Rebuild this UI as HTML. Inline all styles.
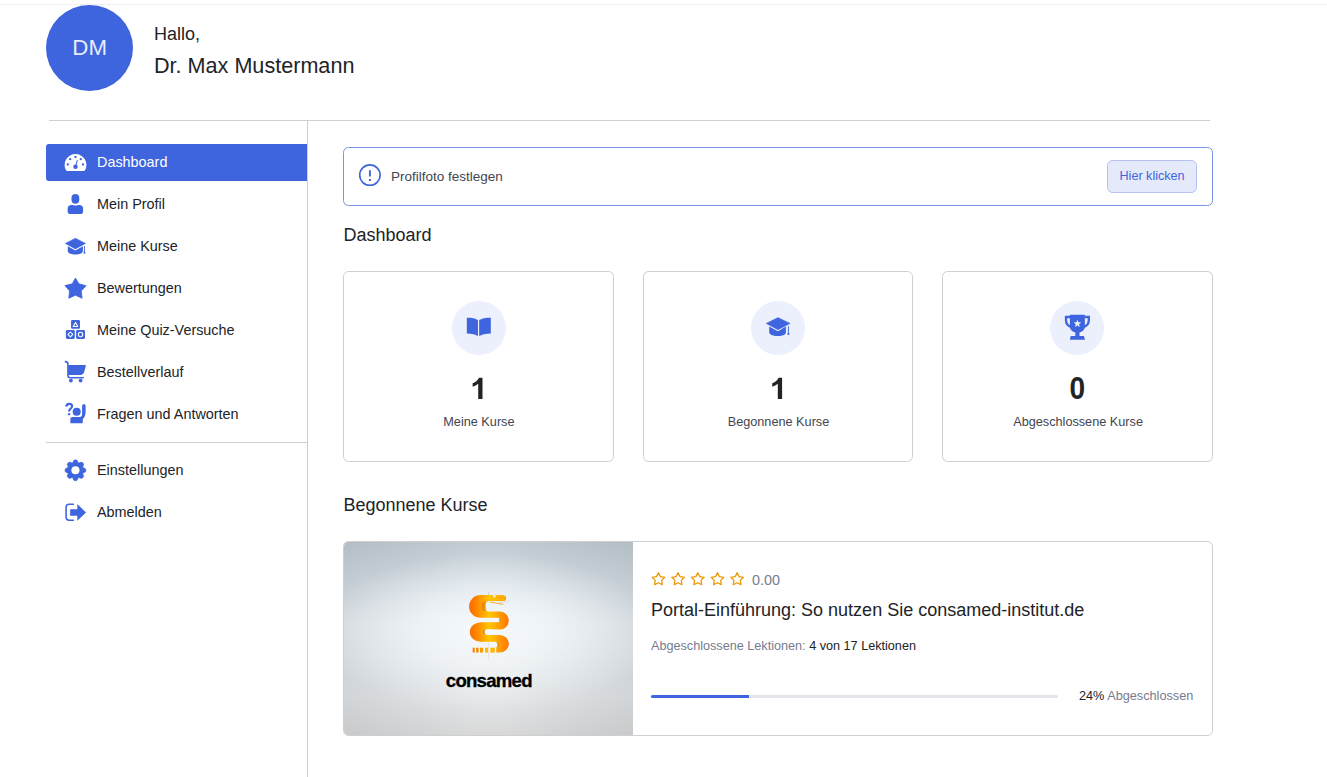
<!DOCTYPE html>
<html lang="de">
<head>
<meta charset="utf-8">
<title>Dashboard</title>
<style>
*{box-sizing:border-box;margin:0;padding:0}
html,body{width:1327px;height:777px;overflow:hidden;background:#fff}
body{font-family:"Liberation Sans",sans-serif;color:#212327;position:relative}
.abs{position:absolute}
.t{position:absolute;white-space:nowrap;line-height:1}
svg{position:absolute;overflow:visible}
.topline{left:0;top:4px;width:1327px;height:1px;background:#eff0f2}
.avatar{left:46px;top:5px;width:87px;height:85.9px;border-radius:50%;background:#3e64de}
.hr{left:49px;top:120px;width:1161px;height:1px;background:#cdcfd5}
.vr{left:307px;top:120px;width:1px;height:657px;background:#cdcfd5}
.hr2{left:46px;top:442px;width:261px;height:1px;background:#cdcfd5}
.active{left:46px;top:144px;width:261px;height:37px;background:#3e64de;border-radius:3px 0 0 3px}
.mi{font-size:14.4px;color:#212327;left:97px}
.alert{left:343px;top:147px;width:870px;height:59px;border:1px solid #7b93e8;border-radius:5.5px;background:#fff}
.btn{left:1107px;top:160px;width:90px;height:33px;border:1px solid #b5c1f1;border-radius:5.5px;background:#e5eafa}
.card{top:271px;width:270.8px;height:191px;border:1px solid #cdcfd5;border-radius:5.5px;background:#fff}
.circ{top:301px;width:54px;height:54px;border-radius:50%;background:#ecf0fc}
.num{font-weight:bold;font-size:31.2px;color:#212327;text-align:center;width:270.8px;top:373px;transform:scaleX(.9);transform-origin:50% 50%}
.lbl{font-size:12.7px;color:#41454f;text-align:center;width:270.8px;top:415.5px}
.h{font-size:18px;color:#212327;left:343.4px}
.course{left:343px;top:541px;width:870px;height:195px;border:1px solid #cdcfd5;border-radius:5.5px;background:#fff;overflow:hidden}
.thumb{left:0;top:0;width:289px;height:195px;
 background:
  radial-gradient(ellipse 60% 40% at 50% 46%, rgba(245,249,252,1) 0%, rgba(245,249,252,.7) 40%, rgba(245,249,252,0) 100%),
  linear-gradient(90deg, rgba(80,90,100,.12), rgba(80,90,100,0) 45%, rgba(80,90,100,0) 55%, rgba(80,90,100,.12)),
  linear-gradient(180deg,#c1cbd2 0%,#d3dce2 21%,#e3e8ec 43%,#e3e6e8 80%,#d8d8d8 100%);}
</style>
</head>
<body>
<div class="abs topline"></div>
<div class="abs avatar"></div>
<div class="t" style="left:72.3px;top:36.8px;font-size:22.3px;color:#e7ecfb">DM</div>
<div class="t" style="left:154px;top:24.5px;font-size:18px;color:#212327">Hallo,</div>
<div class="t" style="left:154px;top:54.5px;font-size:21.6px;color:#212327">Dr. Max Mustermann</div>
<div class="abs hr"></div>
<div class="abs vr"></div>
<div class="abs active"></div>
<div class="abs hr2"></div>

<div class="t mi" style="top:155px;color:#fff">Dashboard</div>
<div class="t mi" style="top:197px">Mein Profil</div>
<div class="t mi" style="top:239px">Meine Kurse</div>
<div class="t mi" style="top:281px">Bewertungen</div>
<div class="t mi" style="top:323px">Meine Quiz-Versuche</div>
<div class="t mi" style="top:365px">Bestellverlauf</div>
<div class="t mi" style="top:407px">Fragen und Antworten</div>
<div class="t mi" style="top:463px">Einstellungen</div>
<div class="t mi" style="top:505px">Abmelden</div>

<div class="abs alert"></div>
<div class="t" style="left:391px;top:169.7px;font-size:13.5px;color:#41454f">Profilfoto festlegen</div>
<div class="abs btn"></div>
<div class="t" style="left:1119.5px;top:169.5px;font-size:12.6px;color:#3e64de">Hier klicken</div>

<div class="t h" style="top:225.5px">Dashboard</div>

<div class="abs card" style="left:343px"></div>
<div class="abs card" style="left:642.6px"></div>
<div class="abs card" style="left:942.2px"></div>
<div class="abs circ" style="left:452px"></div>
<div class="abs circ" style="left:751px"></div>
<div class="abs circ" style="left:1050px"></div>
<div class="t num" style="left:942.2px">0</div>
<div class="t lbl" style="left:343.5px">Meine Kurse</div>
<div class="t lbl" style="left:643.1px">Begonnene Kurse</div>
<div class="t lbl" style="left:942.7px">Abgeschlossene Kurse</div>

<div class="t h" style="top:495.5px">Begonnene Kurse</div>

<div class="abs course">
  <div class="abs thumb"></div>
</div>
<div class="t" style="left:445.8px;top:672px;font-size:18.6px;font-weight:bold;color:#000;letter-spacing:-0.75px;-webkit-text-stroke:0.3px #000">consamed</div>
<div class="t" style="left:752px;top:572.7px;font-size:14.4px;color:#757c8e">0.00</div>
<div class="t" style="left:651px;top:601px;font-size:18px;color:#212327">Portal-Einführung: So nutzen Sie consamed-institut.de</div>
<div class="t" style="left:651px;top:639.8px;font-size:12.65px;color:#757c8e">Abgeschlossene Lektionen: <span style="color:#212327">4 von 17 Lektionen</span></div>
<div class="abs" style="left:651px;top:694.7px;width:406.5px;height:3.5px;border-radius:2px;background:#e3e5eb"></div>
<div class="abs" style="left:651px;top:694.7px;width:98px;height:3.5px;border-radius:2px 0 0 2px;background:#3e64de"></div>
<div class="t" style="left:1079px;top:689.8px;font-size:12.7px;color:#212327">24% <span style="color:#757c8e">Abgeschlossen</span></div>
<svg width="1327" height="777" viewBox="0 0 1327 777" style="left:0;top:0">
<g><path d="M67.1 171 C66.5 171 66.2 170.7 65.9 170.1 A10.9 10.9 0 1 1 85.1 170.1 C84.8 170.7 84.5 171 83.9 171 Z" fill="#fff"/>
<circle cx="67.8" cy="164.4" r="1.15" fill="#3e64de"/>
<circle cx="70.2" cy="159.2" r="1.15" fill="#3e64de"/>
<circle cx="75.5" cy="157" r="1.15" fill="#3e64de"/>
<circle cx="80.8" cy="159.2" r="1.15" fill="#3e64de"/>
<circle cx="83" cy="164.4" r="1.15" fill="#3e64de"/>
<circle cx="75.5" cy="166.7" r="2.2" fill="#3e64de"/><path d="M75.5 166.7 L77.3 160.4" stroke="#3e64de" stroke-width="1.05" stroke-linecap="round"/></g>
<g fill="#3e64de"><rect x="71.5" y="194.1" width="7.8" height="9.6" rx="3.9" ry="4.2"/><path d="M67.65 208.6 C67.65 206 69.2 204.9 71.5 204.9 L73 204.9 C74.4 205.8 76.4 205.8 77.8 204.9 L79.3 204.9 C81.6 204.9 83.1 206 83.1 208.6 L83.1 211.7 C83.1 213.4 81.8 214.1 80.1 214.1 L70.7 214.1 C69 214.1 67.65 213.4 67.65 211.7 Z"/></g>
<g fill="#3e64de"><path d="M75.4 238.2 L85.6 243.4 L75.4 249 L65.3 243.4 Z" stroke="#3e64de" stroke-width="0.5" stroke-linejoin="round"/><path d="M67.8 246.2 L75.4 250.4 L82.9 246.2 L82.9 251.00 C82.9 253.40 78.9 254.6 75.4 254.6 C71.9 254.6 67.8 253.40 67.8 251.00 Z"/><path d="M84.45 246.0 L84.45 252.2" stroke="#3e64de" stroke-width="0.9"/><circle cx="84.45" cy="252.79999999999998" r="1.0"/></g>
<polygon points="75.45,278.05 78.85,283.85 86,285.7 81.2,291 82.1,298.3 75.45,295.2 68.8,298.3 69.6,291 64.95,285.6 72.3,283.85" fill="#3e64de" stroke="#3e64de" stroke-width="0.8" stroke-linejoin="round"/>
<g><rect x="71.05" y="319.9" width="8.9" height="8.9" rx="1.3" fill="#3e64de"/><rect x="65.9" y="330" width="8.9" height="8.9" rx="1.3" fill="#3e64de"/><rect x="76.1" y="330" width="8.9" height="8.9" rx="1.3" fill="#3e64de"/>
<path d="M75.5 322.4 L77.8 326.4 L73.2 326.4 Z" fill="none" stroke="#fff" stroke-width="1.05" stroke-linejoin="round"/>
<path d="M70.35 332 L72.8 334.45 L70.35 336.9 L67.9 334.45 Z" fill="none" stroke="#fff" stroke-width="1.05" stroke-linejoin="round"/>
<circle cx="80.55" cy="334.45" r="2.2" fill="none" stroke="#fff" stroke-width="1.05"/></g>
<g><path d="M65.4 361.6 C67.2 361.6 67.95 362.6 67.95 364.5 L67.95 375.3 C67.95 377 68.8 377.7 70.2 377.7 L83.2 377.7" fill="none" stroke="#3e64de" stroke-width="1.6" stroke-linecap="round"/>
<path d="M68.2 364.9 L85 364.9 C85.7 364.9 86 365.4 85.8 366.1 L84.3 371.6 C83.7 373.8 82.6 374.9 80.8 374.9 L68.2 374.9 Z" fill="#3e64de"/>
<circle cx="70.9" cy="380.6" r="1.9" fill="#3e64de"/><circle cx="80.6" cy="380.6" r="1.9" fill="#3e64de"/></g>
<g><path d="M66.2 406.6 C66.4 404.6 67.6 403.9 69.2 403.9 C71 403.9 72.1 404.9 72.1 406.3 C72.1 408.6 69 408.6 69 411.6" fill="none" stroke="#3e64de" stroke-width="2.1"/><rect x="67.85" y="413.2" width="2.4" height="2" fill="#3e64de"/>
<circle cx="76.7" cy="411.8" r="4.05" fill="#3e64de"/>
<path d="M70.35 423.2 L70.35 419 C70.35 417.8 71.2 417 72.5 417 L79.8 417 C81.3 417 82.1 415.8 82.1 414 L82.1 405.8 C82.1 404.7 82.9 404.15 83.85 404.15 C84.8 404.15 85.6 404.7 85.6 405.8 L85.6 412.3 C85.6 415.3 84.4 417.3 82.8 419.3 L82.7 423.2 Z" fill="#3e64de"/></g>
<g><polygon points="72.62,462.92 74.10,460.04 76.80,460.04 78.28,462.92 78.66,463.08 81.75,462.09 83.66,464.00 82.67,467.09 82.83,467.47 85.71,468.95 85.71,471.65 82.83,473.13 82.67,473.51 83.66,476.60 81.75,478.51 78.66,477.52 78.28,477.68 76.80,480.56 74.10,480.56 72.62,477.68 72.24,477.52 69.15,478.51 67.24,476.60 68.23,473.51 68.07,473.13 65.19,471.65 65.19,468.95 68.07,467.47 68.23,467.09 67.24,464.00 69.15,462.09 72.24,463.08" fill="#3e64de" stroke="#3e64de" stroke-width="0.7" stroke-linejoin="round"/><circle cx="75.45" cy="470.3" r="4.05" fill="#fff"/></g>
<g><path d="M73.4 504.3 L69 504.3 Q66.1 504.3 66.1 507.2 L66.1 517.3 Q66.1 520.2 69 520.2 L73.4 520.2" fill="none" stroke="#3e64de" stroke-width="1.55" stroke-linecap="round"/><polygon points="70.15,509.15 77.3,509.15 77.3,504.1 86,512.4 77.3,520.75 77.3,515.7 70.15,515.7" fill="#3e64de"/></g>
<g><circle cx="369.9" cy="175.1" r="10.2" fill="none" stroke="#3e64de" stroke-width="1.6"/><rect x="368.95" y="170.2" width="1.9" height="6.3" fill="#3e64de"/><rect x="368.9" y="179" width="2" height="2" fill="#3e64de"/></g>
<g fill="#3e64de"><path d="M466.8 317.7 L470.5 317.7 Q474.8 318 477.95 320.1 L477.95 336 Q474.8 334 470.5 333.7 L466.8 333.6 Z"/><path d="M490.8 317.7 L487.1 317.7 Q482.8 318 479.15 320.1 L479.15 336 Q482.8 334 487.1 333.7 L490.8 333.6Z"/></g>
<g fill="#3e64de"><path d="M777.95 317.6 L790.1 323.4 L777.95 329.7 L766.25 323.4 Z" stroke="#3e64de" stroke-width="0.5" stroke-linejoin="round"/><path d="M769.2 326.4 L777.95 331.3 L785.9 326.4 L785.9 332.40 C785.9 334.80 781.45 336 777.95 336 C774.45 336 769.2 334.80 769.2 332.40 Z"/><path d="M788.4 326.2 L788.4 333.4" stroke="#3e64de" stroke-width="0.9"/><circle cx="788.4" cy="334.0" r="1.1"/></g>
<g><path d="M1069.85 314.65 L1084.9 314.65 L1084.9 327 A7.525 5.8 0 0 1 1069.85 327 Z M1075.3 331 L1079.5 331 L1079.5 336 L1084 336 L1084.9 339.7 L1069.85 339.7 L1070.7 336 L1075.3 336 Z" fill="#3e64de"/>
<path d="M1070 317 L1066 317 L1066 320.3 Q1066 325.2 1071 326.9" fill="none" stroke="#3e64de" stroke-width="2.3"/><path d="M1084.8 317 L1088.8 317 L1088.8 320.3 Q1088.8 325.2 1083.8 326.9" fill="none" stroke="#3e64de" stroke-width="2.3"/>
<polygon points="1077.40,319.70 1078.43,322.28 1081.20,322.46 1079.06,324.24 1079.75,326.94 1077.40,325.45 1075.05,326.94 1075.74,324.24 1073.60,322.46 1076.37,322.28" fill="#ecf0fc"/></g>
<polygon points="658.45,572.75 660.42,576.64 664.73,577.31 661.64,580.39 662.33,584.69 658.45,582.70 654.57,584.69 655.26,580.39 652.17,577.31 656.48,576.64" fill="none" stroke="#ed9700" stroke-width="1.25" stroke-linejoin="round"/>
<polygon points="678.10,572.75 680.07,576.64 684.38,577.31 681.29,580.39 681.98,584.69 678.10,582.70 674.22,584.69 674.91,580.39 671.82,577.31 676.13,576.64" fill="none" stroke="#ed9700" stroke-width="1.25" stroke-linejoin="round"/>
<polygon points="697.80,572.75 699.77,576.64 704.08,577.31 700.99,580.39 701.68,584.69 697.80,582.70 693.92,584.69 694.61,580.39 691.52,577.31 695.83,576.64" fill="none" stroke="#ed9700" stroke-width="1.25" stroke-linejoin="round"/>
<polygon points="717.45,572.75 719.42,576.64 723.73,577.31 720.64,580.39 721.33,584.69 717.45,582.70 713.57,584.69 714.26,580.39 711.17,577.31 715.48,576.64" fill="none" stroke="#ed9700" stroke-width="1.25" stroke-linejoin="round"/>
<polygon points="737.10,572.75 739.07,576.64 743.38,577.31 740.29,580.39 740.98,584.69 737.10,582.70 733.22,584.69 733.91,580.39 730.82,577.31 735.13,576.64" fill="none" stroke="#ed9700" stroke-width="1.25" stroke-linejoin="round"/>
<path fill="#212327" d="M482.50 399.05 L478.20 399.05 L478.20 383.76 Q475.84 385.84 472.65 386.84 L472.65 383.16 Q474.33 382.64 476.30 381.19 Q478.28 379.73 479.01 377.80 L482.50 377.80 Z"/>
<path fill="#212327" d="M782.10 399.05 L777.80 399.05 L777.80 383.76 Q775.44 385.84 772.25 386.84 L772.25 383.16 Q773.93 382.64 775.90 381.19 Q777.88 379.73 778.61 377.80 L782.10 377.80 Z"/>
<defs><linearGradient id="sg" gradientUnits="userSpaceOnUse" x1="469" y1="0" x2="509" y2="0">
<stop offset="0" stop-color="#ff6600"/><stop offset="0.22" stop-color="#ff8b00"/><stop offset="0.5" stop-color="#ffc600"/><stop offset="0.78" stop-color="#ff9a00"/><stop offset="1" stop-color="#ff7400"/></linearGradient>
<linearGradient id="sh" x1="0" y1="0" x2="1" y2="0"><stop offset="0" stop-color="#c47600" stop-opacity=".6"/><stop offset="1" stop-color="#e89400" stop-opacity=".2"/></linearGradient>
<linearGradient id="sh2" x1="1" y1="0" x2="0" y2="0"><stop offset="0" stop-color="#c47600" stop-opacity=".6"/><stop offset="1" stop-color="#e89400" stop-opacity=".2"/></linearGradient></defs>
<rect x="488.1" y="591.6" width="1" height="4" fill="#cfcac6"/><rect x="488.1" y="641" width="1" height="18.4" fill="#e9e4e0"/>
<path d="M506.1 598.2 C506.1 596.4 505.2 595.6 503.2 595.5 L496 595.1 L480.4 595.1 A11.3 11.35 0 0 0 480.4 617.8 L499 617.8 A2.2 2.2 0 0 1 499 622.2 L480.9 622.2 A11.1 9.8 0 0 0 480.9 641.8 L496.5 641.8 A2.95 2.95 0 0 1 496.5 647.7 L496.2 647.7 L496.2 652.6 L499.5 652.6 A9.4 8.8 0 0 0 499.5 635 L485.45 635 A2.95 2.95 0 0 1 485.45 629.1 L500 629.6 A8.8 9 0 0 0 500 611.6 L489.3 611.6 Q485.6 611.6 485.6 607.9 L485.6 604.7 Q485.6 601 489.3 601 L503 600.8 C505 600.8 506.1 599.9 506.1 598.2 Z" fill="url(#sg)"/>
<path d="M485.5 601 Q481.8 601 481.8 604.7 L481.8 607.9 Q481.8 611.6 485.5 611.6 L489.3 611.6 Q485.6 611.6 485.6 607.9 L485.6 604.7 Q485.6 601 489.3 601 Z" fill="url(#sh)"/>
<path d="M485.45 629.1 A2.95 2.95 0 0 0 485.45 635 L487.6 635 A2.95 2.95 0 0 1 487.6 629.1 Z" fill="url(#sg)"/>
<path d="M485.45 629.1 A2.95 2.95 0 0 0 485.45 635 L487.6 635 A2.95 2.95 0 0 1 487.6 629.1 Z" fill="url(#sh)"/>
<path d="M499 617.8 A2.2 2.2 0 0 1 499 622.2 L497.4 622.2 A2.2 2.2 0 0 0 497.4 617.8 Z" fill="url(#sg)"/>
<path d="M499 617.8 A2.2 2.2 0 0 1 499 622.2 L497.4 622.2 A2.2 2.2 0 0 0 497.4 617.8 Z" fill="url(#sh2)"/>
<path d="M496.5 641.8 A2.95 2.95 0 0 1 496.5 647.7 L494.6 647.7 A2.95 2.95 0 0 0 494.6 641.8 Z" fill="url(#sg)"/>
<path d="M496.5 641.8 A2.95 2.95 0 0 1 496.5 647.7 L494.6 647.7 A2.95 2.95 0 0 0 494.6 641.8 Z" fill="url(#sh2)"/>
<rect x="490.3" y="647.7" width="4.40" height="4.9" fill="url(#sg)"/>
<rect x="485" y="647.7" width="3.20" height="4.9" fill="url(#sg)"/>
<rect x="480" y="647.7" width="3.00" height="4.9" fill="url(#sg)"/>
<rect x="476.1" y="647.7" width="2.50" height="4.9" fill="url(#sg)"/>
<rect x="472.7" y="647.7" width="2.00" height="4.9" fill="url(#sg)"/>
<rect x="488.1" y="646" width="1" height="8" fill="#efe6dc" opacity=".9"/>
<defs><linearGradient id="hg" gradientUnits="userSpaceOnUse" x1="488" y1="0" x2="506" y2="0"><stop offset="0" stop-color="#ffc600" stop-opacity="0"/><stop offset="0.35" stop-color="#ffbe00" stop-opacity=".9"/><stop offset="1" stop-color="#ffa600" stop-opacity=".95"/></linearGradient></defs>
<path d="M488 595.1 L496 595.1 L503.2 595.5 C505.2 595.6 506.1 596.4 506.1 598.2 C506.1 599.9 505 600.8 503 600.8 L488 601 Z" fill="url(#hg)"/>
<circle cx="494.4" cy="596.1" r="1.6" fill="#fff6ea" stroke="#f0b060" stroke-width="0.35"/>
<path d="M490.3 602.1 L503.1 604.4" stroke="#ffa31a" stroke-width="0.9"/><path d="M498 602.6 L508.8 601.3" stroke="#e3d3cf" stroke-width="0.7"/>
</svg>
</body>
</html>
